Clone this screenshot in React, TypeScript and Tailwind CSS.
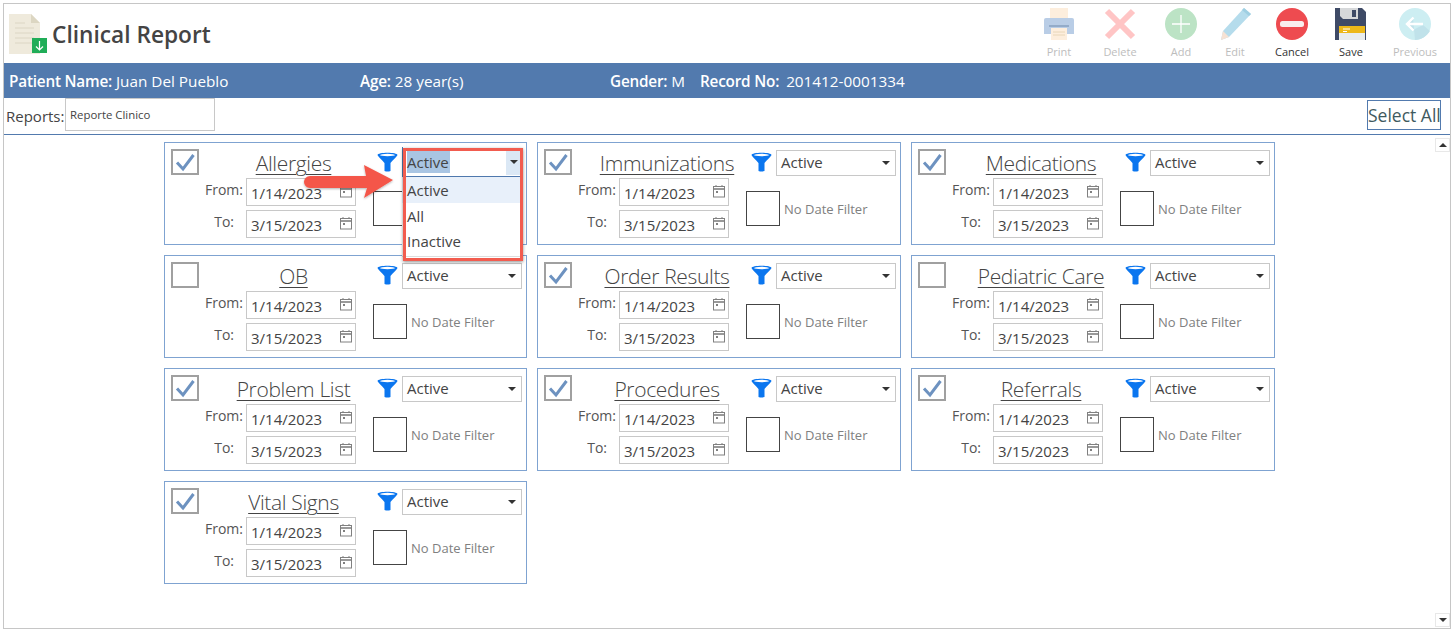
import React from "react";

const FONT = { fontFamily: '"Open Sans", "Noto Sans", sans-serif' };

function Funnel() {
  return (
    <svg width="21" height="20" viewBox="0 0 21 20" className="shrink-0 mt-[3px]">
      <path d="M0.5 3 C0.5 0 20.5 0 20.5 3 C20.5 4 14 10 13.5 11 L13.5 19 Q10.5 20 7.5 19 L7.5 11 C7 10 0.5 4 0.5 3 Z" fill="#0b76ef" />
      <ellipse cx="10.5" cy="3" rx="7.5" ry="1.2" fill="#ffffff" />
    </svg>
  );
}

function Calendar() {
  return (
    <svg width="14" height="14" viewBox="0 0 14 14" className="shrink-0" fill="none" stroke="#808080" strokeWidth="1">
      <rect x="1.5" y="2.5" width="11" height="10.5" />
      <path d="M1.5 5h11" strokeWidth="1.6" />
      <path d="M4 1v2M10 1v2" />
      <rect x="4" y="7" width="2" height="2" fill="#808080" stroke="none" />
    </svg>
  );
}

function Check({ on }: { on: boolean }) {
  return (
    <div className="w-[28px] h-[26px] border-2 border-[#a0a0a0] shrink-0 flex items-center justify-center">
      {on && (
        <svg width="22" height="20" viewBox="0 0 22 20" fill="none">
          <path d="M3 10.5 L9 17 L19.5 3" stroke="#6d92c0" strokeWidth="3" />
        </svg>
      )}
    </div>
  );
}

function DateField({ value }: { value: string }) {
  return (
    <div className="w-[110px] h-[28px] border border-[#c8c8c8] flex items-center justify-between pl-[4px] pr-[2px] text-[15px] text-[#444] pt-[3px]">
      <span>{value}</span>
      <span className="-mt-[5px]">
        <Calendar />
      </span>
    </div>
  );
}

function Card({ title, on, open }: { title: string; on: boolean; open?: boolean }) {
  return (
    <div className="relative h-[103px] border border-[#7fa3d1] pl-[6px] pr-[4px] pt-[6px]">
      <div className="flex items-start h-[27px]">
        <Check on={on} />
        <div className="flex-1 pl-[11px] text-center text-[21px] font-light tracking-[-0.35px] text-[#444] underline decoration-1 underline-offset-[3px] leading-[29px]">
          {title}
        </div>
        <Funnel />
        <div className="ml-[4px] mt-[1px] w-[120px] h-[26px] border border-[#c8c8c8] flex items-center justify-between pl-[4px] pr-[5px] pb-[2px] text-[15px] text-[#444]">
          <span>Active</span>
          <span className="w-0 h-0 mt-[2px] border-x-[4px] border-x-transparent border-t-[4px] border-t-[#333]" />
        </div>
      </div>
      <div className="flex mt-[2px]">
        <div className="grid grid-cols-[72px_110px] gap-x-[3px] gap-y-[4px] text-[14px] text-[#555]">
          <div className="text-right mt-[1px]">From:</div>
          <DateField value="1/14/2023" />
          <div className="text-right pr-[9px] mt-[1px]">To:</div>
          <DateField value="3/15/2023" />
        </div>
        <div className="ml-[17px] mt-[13px] flex items-center h-[35px]">
          <div className="w-[34px] h-[35px] border border-[#444] shrink-0" />
          <span className="ml-[4px] pt-[2px] text-[13px] text-[#808080]">No Date Filter</span>
        </div>
      </div>
      {open && (
        <div className="absolute left-[237px] top-[4px] w-[120px] z-10">
          <div className="h-[30px] bg-white border-b border-l border-[#4f78ad] flex items-center justify-between pl-[4px] text-[15px] text-[#444]">
            <span className="bg-[#a9c5e3] leading-[22px] pr-[1px]">Active</span>
            <span className="w-[16px] h-[26px] mt-[1px] bg-[#dbe8f5] flex items-center justify-center">
              <span className="w-0 h-0 border-x-[4px] border-x-transparent border-t-[4px] border-t-[#333]" />
            </span>
          </div>
          <div className="bg-white h-[80px] border-b border-[#dddddd] text-[15px] text-[#444] leading-[25px]">
            <div className="bg-[#e8f0fa] h-[26px] pl-[5px] pt-[1px]">Active</div>
            <div className="pl-[5px] mt-[1px]">All</div>
            <div className="pl-[5px]">Inactive</div>
          </div>
          <div className="absolute left-[1px] top-[1px] w-[120px] h-[113px] border-[3px] border-[#f25c4f] shadow-[0_1px_3px_rgba(0,0,0,0.45)]" />
        </div>
      )}
    </div>
  );
}

const IconPrint = () => (
  <svg width="32" height="32" viewBox="0 0 32 32">
    <rect x="7" y="0" width="18" height="11" fill="#fdeedd" />
    <path d="M3 10h26a2 2 0 0 1 2 2v14H1V12a2 2 0 0 1 2-2z" fill="#b9cde6" />
    <rect x="8" y="20" width="16" height="12" fill="#fdeedd" />
    <path d="M10 24h12M10 27h12" stroke="#e8d6b8" strokeWidth="1" />
    <rect x="6" y="17" width="20" height="2" fill="#93abc9" />
  </svg>
);
const IconDelete = () => (
  <svg width="32" height="32" viewBox="0 0 32 32">
    <path d="M3 3L29 29M29 3L3 29" stroke="#ffc5c5" strokeWidth="6" />
  </svg>
);
const IconAdd = () => (
  <svg width="32" height="32" viewBox="0 0 32 32">
    <circle cx="16" cy="16" r="16" fill="#bce3c5" />
    <path d="M16 7v18M7 16h18" stroke="#fff" strokeWidth="1.3" />
  </svg>
);
const IconEdit = () => (
  <svg width="32" height="32" viewBox="0 0 32 32">
    <path d="M25 0L32 6L10 29L2 32L4 23Z" fill="#b5dcec" />
    <path d="M4 23L10 29L2 32Z" fill="#f6e2d4" />
    <path d="M25 0L32 6L30 8L23 2Z" fill="#9fcfe2" />
  </svg>
);
const IconCancel = () => (
  <svg width="32" height="32" viewBox="0 0 32 32">
    <circle cx="16" cy="16" r="16" fill="#ee4b50" />
    <rect x="4" y="13" width="24" height="6" rx="2.5" fill="#f9eeee" />
  </svg>
);
const IconSave = () => (
  <svg width="32" height="32" viewBox="0 0 32 32">
    <path d="M0 0H27L31 4V32H0Z" fill="#3e4a66" />
    <path d="M5 0H23V11H8L5 8Z" fill="#d6d8da" />
    <rect x="17" y="2" width="4" height="7" fill="#3e4a66" />
    <rect x="4" y="18" width="26" height="14" fill="#e9eded" />
    <rect x="4" y="18" width="26" height="7" fill="#edb818" />
    <path d="M8 21h7M8 23.5h4" stroke="#fff" strokeWidth="1" />
  </svg>
);
const IconPrev = () => (
  <svg width="32" height="32" viewBox="0 0 32 32">
    <circle cx="16" cy="16" r="16" fill="#cdeef2" />
    <path d="M14 10L8 16L14 22L24 17L31 23C28 28 22 32 16 32Z" fill="#c0e2ea" />
    <path d="M8 16H24M14.5 9.5L8 16L14.5 22.5" fill="none" stroke="#fff" strokeWidth="2.4" />
  </svg>
);

function Tool({ w, label, on, children }: { w: string; label: string; on?: boolean; children: React.ReactNode }) {
  return (
    <div className={`${w} flex flex-col items-center`}>
      {children}
      <div className={`text-[11px] leading-[15px] mt-[4px] ${on ? "text-[#333]" : "text-[#bdbdbd]"}`}>{label}</div>
    </div>
  );
}

const cards: [string, boolean][] = [
  ["Allergies", true],
  ["Immunizations", true],
  ["Medications", true],
  ["OB", false],
  ["Order Results", true],
  ["Pediatric Care", false],
  ["Problem List", true],
  ["Procedures", true],
  ["Referrals", true],
  ["Vital Signs", true],
];

export default function App() {
  return (
    <div style={FONT} className="w-[1453px] h-[631px] bg-white overflow-hidden pt-[3px] pl-[3px]">
      <div className="w-[1448px] h-[626px] border border-[#c6c6c6] flex flex-col">
        {/* header */}
        <div className="h-[59px] flex justify-between">
          <div className="flex items-start pl-[5px] pt-[10px]">
            <svg width="39" height="40" viewBox="0 0 39 40">
              <path d="M0 0H22L31 9V40H0Z" fill="#efeadc" />
              <path d="M22 0L31 9H22Z" fill="#dcd6c2" />
              <path d="M6 9h10M6 14h19M6 19h19M6 24h19M6 29h19" stroke="#dcd6c4" strokeWidth="1" />
              <rect x="23" y="24" width="15" height="15" fill="#20ad58" />
              <path d="M30.5 27v9M27 32.5l3.5 3.5 3.5-3.5" fill="none" stroke="#fff" strokeWidth="1.2" />
            </svg>
            <div className="ml-[4px] mt-[4px] text-[22.7px] leading-[34px] font-semibold text-[#444]">Clinical Report</div>
          </div>
          <div className="flex pt-[4px]">
            <Tool w="w-[54px]" label="Print"><IconPrint /></Tool>
            <Tool w="w-[68px]" label="Delete"><IconDelete /></Tool>
            <Tool w="w-[54px]" label="Add"><IconAdd /></Tool>
            <Tool w="w-[54px]" label="Edit"><IconEdit /></Tool>
            <Tool w="w-[60px]" label="Cancel" on><IconCancel /></Tool>
            <Tool w="w-[58px]" label="Save" on><IconSave /></Tool>
            <Tool w="w-[70px]" label="Previous"><IconPrev /></Tool>
          </div>
        </div>
        {/* patient bar */}
        <div className="h-[35px] bg-[#527aae] text-white text-[15.3px] flex items-center pl-[5px] pt-[1px]">
          <div className="w-[351px]"><b className="font-semibold tracking-[-0.2px]">Patient Name:</b> Juan Del Pueblo</div>
          <div className="w-[250px]"><b className="font-semibold tracking-[-0.2px]">Age:</b> 28 year(s)</div>
          <div className="w-[90px] whitespace-nowrap"><b className="font-semibold tracking-[-0.2px]">Gender:</b> M</div>
          <div><b className="font-semibold tracking-[-0.2px]">Record No:</b><span className="ml-[7px]">201412-0001334</span></div>
        </div>
        {/* reports row */}
        <div className="h-[37px] border-b border-[#527aae] flex items-start justify-between pl-[2px] pr-[9px] shrink-0">
          <div className="flex items-start">
            <div className="w-[57px] whitespace-nowrap text-[15px] text-[#444] mt-[6px] leading-[24px]">Reports:</div>
            <div className="ml-[2px] w-[150px] h-[33px] border border-[#c8c8c8] text-[11.4px] text-[#444] pl-[4px] pt-[1px] flex items-center">Reporte Clinico</div>
          </div>
          <div className="mt-[2px] w-[74px] h-[30px] border border-[#527aae] text-[17.5px] leading-[28px] text-[#3f5a5e] text-center whitespace-nowrap">Select All</div>
        </div>
        {/* body */}
        <div className="flex-1 flex min-h-0">
          <div className="flex-1 pl-[160px] pt-[7px]">
            <div className="grid grid-cols-[363px_364px_364px] auto-rows-[103px] gap-x-[10px] gap-y-[10px]">
              {cards.map(([t, on], i) => (
                <Card key={t} title={t} on={on} open={i === 0} />
              ))}
            </div>
          </div>
          <div className="w-[15px] flex flex-col justify-between pt-[3px] pb-[1px]">
            <div className="h-[14px] border border-[#e8e8e8] flex items-center justify-center">
              <span className="w-0 h-0 border-x-[4px] border-x-transparent border-b-[4px] border-b-[#333]" />
            </div>
            <div className="h-[14px] border border-[#e8e8e8] flex items-center justify-center">
              <span className="w-0 h-0 border-x-[4px] border-x-transparent border-t-[4px] border-t-[#333]" />
            </div>
          </div>
        </div>
      </div>
      {/* annotation arrow */}
      <svg width="100" height="40" viewBox="0 0 100 40" className="absolute left-[300px] top-[162px] z-20">
        <defs>
          <filter id="s" x="-10%" y="-20%" width="120%" height="140%">
            <feDropShadow dx="0" dy="1" stdDeviation="1" floodColor="#000" floodOpacity="0.3" />
          </filter>
        </defs>
        <path d="M10 14H66L64 3L93 18L64 36L67 26H10A6 6 0 0 1 10 14Z" fill="#f4574a" filter="url(#s)" />
      </svg>
    </div>
  );
}
